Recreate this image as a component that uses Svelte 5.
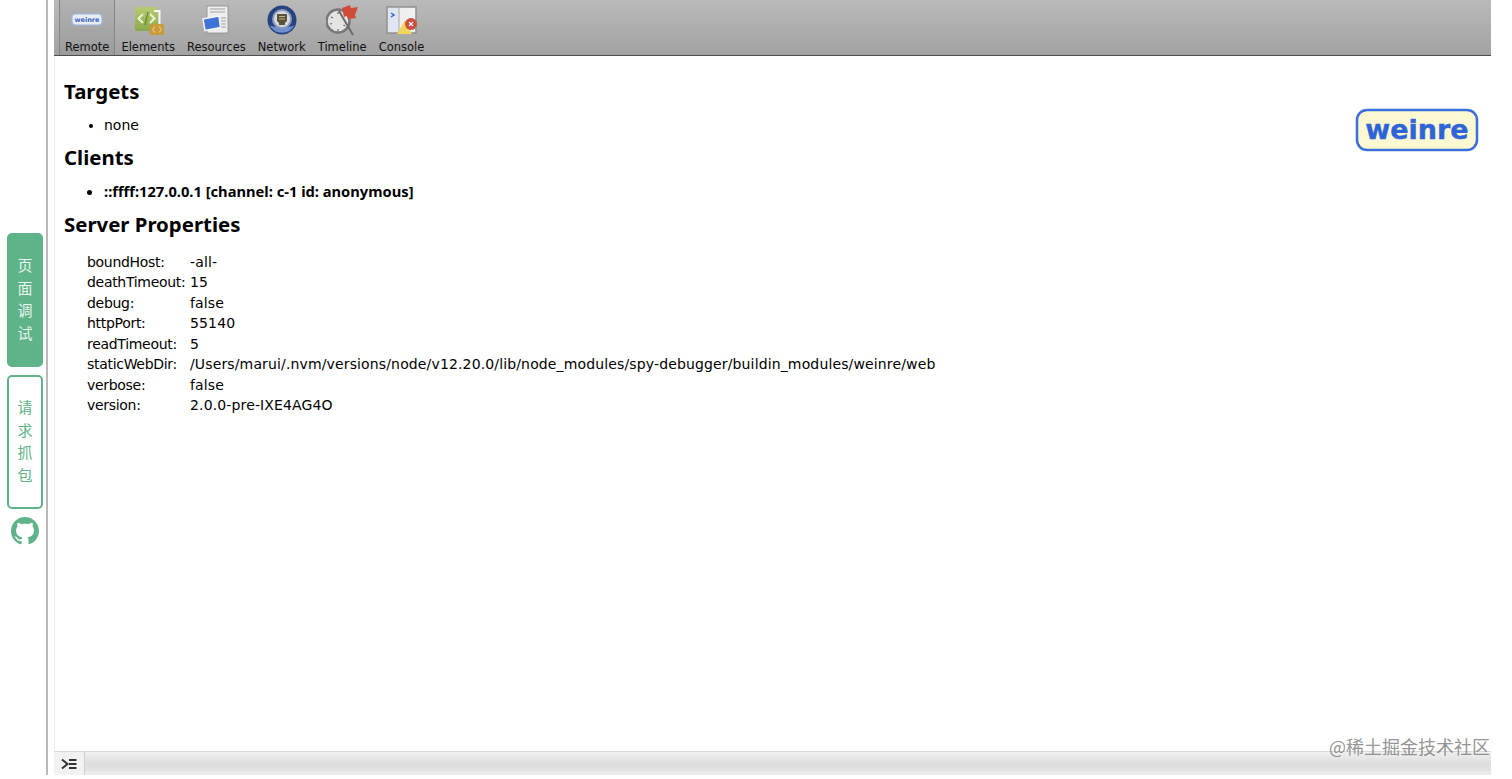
<script>
  const tabs = [
    { id: 'remote', label: 'Remote' },
    { id: 'elements', label: 'Elements' },
    { id: 'resources', label: 'Resources' },
    { id: 'network', label: 'Network' },
    { id: 'timeline', label: 'Timeline' },
    { id: 'console', label: 'Console' }
  ];
  const props = [
    ['boundHost:', '-all-'],
    ['deathTimeout:', '15'],
    ['debug:', 'false'],
    ['httpPort:', '55140'],
    ['readTimeout:', '5'],
    ['staticWebDir:', '/Users/marui/.nvm/versions/node/v12.20.0/lib/node_modules/spy-debugger/buildin_modules/weinre/web'],
    ['verbose:', 'false'],
    ['version:', '2.0.0-pre-IXE4AG4O']
  ];
</script>

<div class="page">
  <aside class="side">
    <div class="vtab on"><span>页</span><span>面</span><span>调</span><span>试</span></div>
    <div class="vtab"><span>请</span><span>求</span><span>抓</span><span>包</span></div>
    <svg class="gh" viewBox="0 0 16 16" width="28" height="28">
      <path fill="#5fb388" d="M8 0C3.58 0 0 3.58 0 8c0 3.54 2.29 6.53 5.47 7.59.4.07.55-.17.55-.38 0-.19-.01-.82-.01-1.49-2.01.37-2.53-.49-2.69-.94-.09-.23-.48-.94-.82-1.13-.28-.15-.68-.52-.01-.53.63-.01 1.08.58 1.23.82.72 1.21 1.87.87 2.33.66.07-.52.28-.87.51-1.07-1.78-.2-3.64-.89-3.64-3.95 0-.87.31-1.59.82-2.15-.08-.2-.36-1.02.08-2.12 0 0 .67-.21 2.2.82.64-.18 1.32-.27 2-.27s1.36.09 2 .27c1.53-1.04 2.2-.82 2.2-.82.44 1.1.16 1.92.08 2.12.51.56.82 1.27.82 2.15 0 3.07-1.87 3.75-3.65 3.95.29.25.54.73.54 1.48 0 1.07-.01 1.93-.01 2.2 0 .21.15.46.55.38A8.013 8.013 0 0 0 16 8c0-4.42-3.58-8-8-8z"/>
    </svg>
  </aside>

  <main class="main">
    <nav class="toolbar">
      {#each tabs as t}
        <div class="tool {t.id}">
          <svg viewBox="0 0 32 32" width="32" height="32" class="ico">
            <defs>
              <linearGradient id="g-{t.id}" x1="0" y1="0" x2="0" y2="1">
                <stop offset="0" stop-color="#b7cc72"/>
                <stop offset="1" stop-color="#8aa94c"/>
              </linearGradient>
            </defs>
            {#if t.id === 'remote'}
              <rect x="1" y="10" width="30" height="11" rx="3.500" fill="#e9ecf4" stroke="#9db6e6" stroke-width="1.200"/>
              <text x="16" y="18" text-anchor="middle" class="minitext">weinre</text>
            {:else if t.id === 'elements'}
              <rect x="3" y="3" width="23" height="24" rx="2.500" fill="url(#g-{t.id})"/>
              <path d="M11 10l-4.500 4.500 4.500 4.500M18 10l4.500 4.500-4.500 4.500" fill="none" stroke="#eef3cf" stroke-width="2"/>
              <path d="M16 8l-3 13" stroke="#6d8f36" stroke-width="1.500"/>
              <path d="M22 7h5.500v17" fill="none" stroke="#f6f6f2" stroke-width="2"/>
              <rect x="18" y="20" width="14" height="11" rx="1.500" fill="#c99a3a"/>
              <path d="M23 22.500l-2.500 3 2.500 3M27 22.500l2.500 3-2.500 3" fill="none" stroke="#f3dd98" stroke-width="1"/>
            {:else if t.id === 'resources'}
              <rect x="7" y="2" width="21" height="27" fill="#eeeeee" stroke="#8b8b8b" stroke-width=".8"/>
              <path d="M10 5h15M10 8h15M21 14h5M21 17h5M21 20h5M21 23h5" stroke="#a0a0a0" stroke-width="1"/>
              <path d="M3 15l16-3 1.500 11.500-15.500 3z" fill="#3f74d6" stroke="#f4f4f4" stroke-width="1.500"/>
            {:else if t.id === 'network'}
              <circle cx="16" cy="16" r="14.500" fill="#25437f"/>
              <path d="M3.500 21a14 14 0 0 0 25 0c-3 3-22 3-25 0z" fill="#6f90d0"/>
              <circle cx="16" cy="15" r="10" fill="#8f9cb8"/>
              <circle cx="16" cy="15" r="8" fill="#d6dae2"/>
              <path d="M11 10h10v7l-2 2v2h-6v-2l-2-2z" fill="#5a5238"/>
              <path d="M13 12.500h6M13 15h6" stroke="#c0b484" stroke-width="1"/>
            {:else if t.id === 'timeline'}
              <circle cx="12" cy="17" r="11.500" fill="#e4e4e2" stroke="#777" stroke-width="2.500"/>
              <path d="M12 8v2M5 13l2 1M4 20l2-.5M12 27v-2M19 22l-1.500-1" stroke="#666" stroke-width="1.200"/>
              <path d="M13 7l14 24" stroke="#6b6b6b" stroke-width="2"/>
              <path d="M16 4l8-3 1 3 7-1-3 8 1 3-8 1-1-3-3 1z" fill="#d04c38"/>
            {:else}
              <rect x="2" y="3" width="29" height="26" fill="#f0f0f0" stroke="#8f8f8f" stroke-width="1.500"/>
              <rect x="3" y="4" width="11" height="24" fill="#dfe6f2"/>
              <path d="M14 4v24" stroke="#a8a8a8" stroke-width="1"/>
              <path d="M6 9l3 2-3 2" fill="none" stroke="#2f62c8" stroke-width="1.500"/>
              <path d="M12 30l8-14 7 14z" fill="#f0d65c"/>
              <circle cx="26" cy="20" r="6" fill="#d04d42"/>
              <path d="M24 18l4 4M28 18l-4 4" stroke="#fff" stroke-width="1.200"/>
            {/if}
          </svg>
          <span>{t.label}</span>
        </div>
      {/each}
    </nav>

    <section class="content">
      <svg class="logo" viewBox="0 0 124 44" width="124" height="44" role="img" aria-label="weinre">
        <rect x="2" y="2" width="120" height="40" rx="10" fill="#fcf8d2" stroke="#3a6fdc" stroke-width="2.500"/>
        <text x="62" y="31" text-anchor="middle" class="logotext">weinre</text>
      </svg>

      <h2>Targets</h2>
      <ul><li>none</li></ul>
      <h2>Clients</h2>
      <ul class="second"><li class="bold">::ffff:127.0.0.1 [channel: c-1 id: anonymous]</li></ul>
      <h2>Server Properties</h2>
      <table>
        <tbody>
          {#each props as p}
            <tr><td class="k">{p[0]}</td><td class="v">{p[1]}</td></tr>
          {/each}
        </tbody>
      </table>
    </section>

    <footer class="status">
      <div class="drawer">
        <svg viewBox="0 0 16 12" width="16" height="12">
          <path d="M1 1.500l5.500 4.500-5.500 4.500" fill="none" stroke="#333" stroke-width="2"/>
          <path d="M8 2h7.500M8 6h7.500M8 10h7.500" stroke="#333" stroke-width="2"/>
        </svg>
      </div>
    </footer>
  </main>

  <div class="mark">@稀土掘金技术社区</div>
</div>

<style>
  :global(body) {
    margin: 0;
    background: #fff;
  }
  .page {
    position: relative;
    display: flex;
    height: 779px;
    width: 1512px;
    overflow: hidden;
    font-family: "DejaVu Sans", "Noto Sans CJK SC", sans-serif;
    color: #000;
    background: #fff;
  }
  .side {
    width: 46px;
    height: 775px;
    box-sizing: content-box;
    border-right: 2px solid #b9b9b9;
    display: flex;
    flex-direction: column;
    align-items: center;
    gap: 8px;
    flex: none;
  }
  .vtab {
    margin-left: 4px;
    width: 36px;
    height: 134px;
    box-sizing: border-box;
    border: 2px solid #5fb388;
    border-radius: 5px;
    color: #5fb388;
    display: flex;
    flex-direction: column;
    align-items: center;
    justify-content: center;
    padding-bottom: 2px;
    font-family: "Noto Sans CJK SC", sans-serif;
    font-size: 15px;
    line-height: 22.500px;
  }
  .vtab.on {
    margin-top: 233px;
    background: #5fb388;
    color: #e8f5ee;
  }
  .gh {
    margin-left: 4px;
    flex: none;
  }
  .main {
    margin-left: 6px;
    width: 1437px;
    height: 775px;
    display: flex;
    flex-direction: column;
    flex: none;
  }
  .toolbar {
    height: 56px;
    flex: none;
    box-sizing: border-box;
    border-bottom: 1px solid #4d4d4d;
    background: linear-gradient(#bababa, #a2a2a2);
    display: flex;
    padding-left: 5px;
  }
  .tool {
    display: flex;
    flex-direction: column;
    align-items: center;
    font-size: 11.500px;
    line-height: 14px;
    color: #111;
    padding: 4px 6px 0;
    white-space: nowrap;
  }
  .tool .ico {
    flex: none;
    margin-bottom: 3.500px;
  }
  .tool.remote {
    background: rgba(0, 0, 0, 0.04);
    border-left: 1px solid #858585;
    border-right: 1px solid #858585;
    padding: 4px 5px 0;
  }
  .minitext {
    font-family: "DejaVu Sans", sans-serif;
    font-weight: 700;
    font-size: 6.500px;
    fill: #3565c4;
  }
  .content {
    position: relative;
    flex: 1;
    min-height: 0;
    padding: 24px 0 0 9px;
    border-left: 1px solid #eeeeee;
    border-bottom: 1px solid #d9d9d9;
  }
  .logo {
    position: absolute;
    top: 52px;
    right: 12px;
  }
  .logotext {
    font-family: "DejaVu Sans", sans-serif;
    font-weight: 700;
    font-size: 27px;
    fill: #2f64d8;
    stroke: #2f64d8;
    stroke-width: 0.400;
  }
  h2 {
    margin: -1px 0 1px;
    font-family: "Noto Sans", sans-serif;
    font-size: 20.400px;
    line-height: 24px;
    font-weight: 700;
  }
  ul {
    margin: 0;
    padding: 12px 0 12px 40px;
    font-size: 14px;
    line-height: 18px;
  }
  ul.second {
    padding-bottom: 13px;
  }
  .bold {
    font-family: "Noto Sans", sans-serif;
    font-weight: 700;
    font-size: 14.700px;
  }
  table {
    margin: 15.700px 0 0 23px;
    border-collapse: collapse;
    font-size: 14px;
  }
  td {
    padding: 0;
    height: 20.500px;
    line-height: 20.500px;
    white-space: nowrap;
  }
  .k {
    width: 103px;
    letter-spacing: -0.300px;
  }
  .v {
    letter-spacing: 0.140px;
  }
  .status {
    height: 23px;
    flex: none;
    background: linear-gradient(#f0f0f0, #dcdcdc 55%, #ececec);
    display: flex;
  }
  .drawer {
    width: 30px;
    display: flex;
    align-items: center;
    justify-content: center;
    background: #f2f2f2;
    border-right: 1px solid #d0d0d0;
  }
  .mark {
    position: absolute;
    right: 22px;
    bottom: 23px;
    font-family: "Noto Sans CJK SC", sans-serif;
    font-size: 18px;
    line-height: 20px;
    color: rgba(120, 120, 120, 0.8);
  }
</style>
